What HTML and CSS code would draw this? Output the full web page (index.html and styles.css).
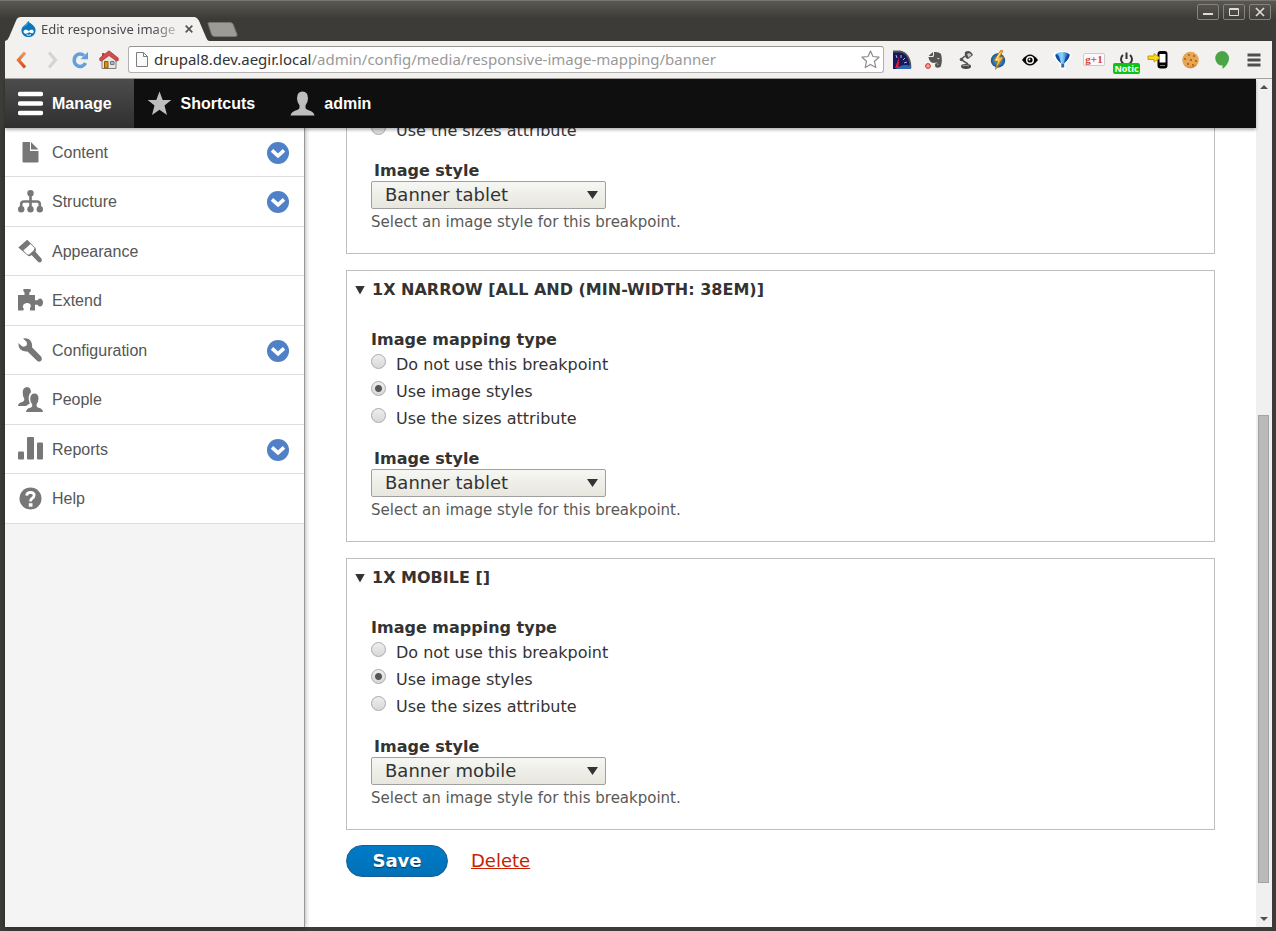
FILE: index.html
```html
<!DOCTYPE html>
<html lang="en">
<head>
<meta charset="utf-8">
<title>Edit responsive image mapping</title>
<link rel="stylesheet" href="styles.css">
</head>
<body>
<svg class="defs" aria-hidden="true">
  <defs>
    <linearGradient id="orange" x1="0" y1="0" x2="0" y2="1"><stop offset="0" stop-color="#f09a5c"/><stop offset="1" stop-color="#dd4814"/></linearGradient>
    <linearGradient id="balloon" x1="0" y1="0" x2="1" y2="0"><stop offset="0" stop-color="#2d9be8"/><stop offset=".45" stop-color="#8fd4ff"/><stop offset="1" stop-color="#0b3f93"/></linearGradient>
    <radialGradient id="globe"><stop offset="0" stop-color="#59b7ea"/><stop offset="1" stop-color="#17518b"/></radialGradient>
    <symbol id="chevron" viewBox="0 0 22 22"><circle cx="11" cy="11" r="11" fill="#4f80c8"/><path d="M5 8.300 11 13.800 17 8.300" fill="none" stroke="#fff" stroke-width="3.600"/></symbol>
  </defs>
</svg>

<header class="titlebar">
  <div class="tab">
    <svg class="tab-shape" viewBox="0 0 204 25" preserveAspectRatio="none" aria-hidden="true"><path d="M0 25Q3 24 4 21L11 4Q12 0 16 0H189Q192 0 194 4L201 21Q202 24 204 25Z" fill="#f2f1f0"/></svg>
    <svg class="favicon" width="15" height="16" viewBox="0 0 15 16" aria-hidden="true"><path d="M7.2 0C8 2.2 14.6 4 14.6 9.4A7 6.6 0 0 1 .4 9.4C.4 5 5.500 4 7.200 0Z" fill="#0678be"/><path d="M6 2.700Q7 2 7.200 .5Q7.500 3 5 4.500Q3 5.500 2.600 6.500Q2.800 4.500 6 2.700Z" fill="#5fb3e2"/><path d="M2.500 10.500C3 8 6 8.500 7.800 10C9.500 8.600 12.500 8 12.700 10.600C12.800 13 10.500 12.600 8.200 11.300C6 13.300 2.500 13.300 2.500 10.500Z" fill="#fff"/><path d="M5.500 13.700Q7.800 15 10 13.600" fill="none" stroke="#fff" stroke-width="1"/></svg>
    <span class="tab-title">Edit responsive image</span>
    <button class="tab-close" aria-label="Close tab"><svg width="8" height="8" viewBox="0 0 8 8"><path d="M.7 .7 7.300 7.300M7.300 .7 .7 7.300" stroke="#555" stroke-width="1.700"/></svg></button>
  </div>
  <button class="new-tab" aria-label="New tab"><svg width="31" height="15" viewBox="0 0 31 15"><path d="M1 1.500Q1 .5 3 .5H23Q25 .5 26 2L30 12.500Q30.500 14.500 28 14.500H7.500Q5.500 14.500 4.500 12.500Z" fill="#9c9b98" stroke="#777570"/></svg></button>
  <div class="window-controls">
    <button aria-label="Minimize"><svg width="20" height="14" viewBox="0 0 20 14"><path d="M5 9H15" stroke="#dfdbd2" stroke-width="2"/></svg></button>
    <button aria-label="Maximize"><svg width="20" height="14" viewBox="0 0 20 14"><path d="M5.500 3.500H14.500V10.500H5.500ZM5 4.500H15" fill="none" stroke="#dfdbd2"/></svg></button>
    <button aria-label="Close"><svg width="20" height="14" viewBox="0 0 20 14"><path d="M6 3 14 11M14 3 6 11" stroke="#dfdbd2" stroke-width="1.700"/></svg></button>
  </div>
</header>

<div class="window">
  <nav class="browser-bar" aria-label="Browser">
    <div class="nav-buttons">
      <button aria-label="Back"><svg width="18" height="18" viewBox="0 0 18 18"><path d="M12 1.500 5.500 9 12 16.500" fill="none" stroke="url(#orange)" stroke-width="3.200"/></svg></button>
      <button aria-label="Forward"><svg width="18" height="18" viewBox="0 0 18 18"><path d="M7 1.500 13.500 9 7 16.500" fill="none" stroke="#d6d3d0" stroke-width="3.200"/></svg></button>
      <button aria-label="Reload"><svg width="18" height="18" viewBox="0 0 18 18"><path d="M14.500 12A6 6.200 0 1 1 13 4.500" fill="none" stroke="#659fdb" stroke-width="3.600"/><path d="M9.500 8.300H17V1Z" fill="#659fdb"/></svg></button>
      <button aria-label="Home"><svg width="20" height="20" viewBox="0 0 20 20"><path d="M3 9 10 3 17 9V18.500H3Z" fill="#e8e6df" stroke="#837e77"/><path d="M3 3H5.500V7H3Z" fill="#b94444"/><path d="M.8 10.500V8L10 .8 19.200 8V10.500L17.500 11 10 5.500 2.500 11Z" fill="#cf4f4f" stroke="#a8292c" stroke-width=".7"/><path d="M5.500 11.500H9V18H5.500Z" fill="#d8930f" stroke="#8d5a0c"/><path d="M11.500 11.500H15V14.500H11.500Z" fill="#a8bdd3" stroke="#68788b"/></svg></button>
    </div>
    <div class="omnibox">
      <svg width="12" height="15" viewBox="0 0 12 15" aria-hidden="true"><path d="M.5 .5H7.500L11.500 4.500V14.500H.5ZM7.500 .5V4.500H11.500" fill="#fafafa" stroke="#7d7d7d"/></svg>
      <div class="url"><span class="host">drupal8.dev.aegir.local</span>/admin/config/media/responsive-image-mapping/banner</div>
      <button class="bookmark" aria-label="Bookmark"><svg width="19" height="19" viewBox="0 0 19 19"><path d="M9.500 1 12 6.500 18 7.200 13.500 11.300 14.800 17.500 9.500 14.400 4.200 17.500 5.500 11.300 1 7.200 7 6.500Z" fill="#fff" stroke="#8c8c8c" stroke-width="1.200" stroke-linejoin="round"/></svg></button>
    </div>
    <div class="extensions">
      <button aria-label="Speed"><svg width="20" height="20" viewBox="0 0 20 20"><path d="M1 1H8C14 2 19 8 19 19H1Z" fill="#17195b"/><path d="M1 1.500H8C14 2.500 18.500 8 18.500 18" fill="none" stroke="#555" stroke-width="1.800"/><path d="M4 19Q10 13 19 16V19Z" fill="#2f66b2"/><path d="M4 5 5 8M9 5V8M13 8 11 10M15 12 12 13" stroke="#aab4e8"/><path d="M3 18 7 7 6.500 18Z" fill="#f5162b"/></svg></button>
      <button aria-label="Clipper"><svg width="20" height="20" viewBox="0 0 20 20"><path d="M5 5.500 9 2V5Q9 6 8 6H5ZM10 2Q15 1.500 17 4Q19 11 16.500 17Q11 19 11 15Q11 12 14 13.500Q13 15 14 15.500Q15 14 13 12.500L9 13Q5 12 4.500 7H9Q10 7 10 5Z" fill="#555"/><path d="M13 8Q15 7.500 15.500 9Q14 9.500 13 8Z" fill="#fff"/><circle cx="4" cy="16" r="2.400" fill="#f79e8d" stroke="#bf3528"/></svg></button>
      <button aria-label="Lamp"><svg width="20" height="20" viewBox="0 0 20 20"><path d="M9 2Q14-1 17 5L12 9Q8 8 9 2Z" fill="#4f4f4f"/><path d="M11 4Q14 2 15.500 5L12.500 7.500Z" fill="#c9c9c9"/><path d="M9 6 5 9.500 12 14" fill="none" stroke="#555" stroke-width="1.600"/><circle cx="5.500" cy="9.500" r="1.800" fill="#555"/><ellipse cx="10" cy="16.500" rx="5" ry="2.400" fill="#444"/><path d="M6.500 16Q10 14.500 13 16" fill="none" stroke="#aaa"/></svg></button>
      <button aria-label="Lightning"><svg width="20" height="20" viewBox="0 0 20 20"><circle cx="10" cy="10.500" r="7.200" fill="url(#globe)"/><path d="M13 0 5.500 11H9.500L7.500 19.500 15.500 7H11.500L15 1Z" fill="#fcb831" stroke="#a77024" stroke-width=".8"/><path d="M12 3 8 10H11" fill="none" stroke="#fff0a8"/></svg></button>
      <button aria-label="Eye"><svg width="20" height="20" viewBox="0 0 20 20"><path d="M2 10Q10-1 18 10Q10 21 2 10Z" fill="#050505"/><circle cx="10" cy="10" r="4" fill="#fff"/><circle cx="10" cy="10" r="2.600" fill="#050505"/><circle cx="9.500" cy="9.500" r=".9" fill="#fff"/></svg></button>
      <button aria-label="Balloon"><svg width="20" height="20" viewBox="0 0 20 20"><path d="M3 4Q10 1 18 4V6L12 14V18H9V14L2.500 6Z" fill="#fff" stroke="#fff" stroke-width="3"/><path d="M3.500 4.500Q5.500 2 10.500 2Q16 2 17.500 4.500Q18 7 12 13.500H9.500Q3 7.500 3.500 4.500Z" fill="url(#balloon)"/><path d="M3.500 4.500Q7 3 9 13.500Q3 8 3.500 4.500ZM17.500 4.500Q14 3 12 13.500Q18 8 17.500 4.500Z" fill="#104b9e"/><path d="M9.300 13.500H12.200V17.500H9.300Z" fill="#2b6ca7"/></svg></button>
      <button aria-label="Plus one" class="plus-one"><span>g+1</span></button>
      <button aria-label="Power" class="power"><svg width="20" height="20" viewBox="0 0 20 20"><path d="M7 5A5.500 5.500 0 1 0 14 5M10.500 2.500V9" fill="none" stroke="#333" stroke-width="2"/></svg><span class="badge">Notic</span></button>
      <button aria-label="Send to phone"><svg width="22" height="20" viewBox="0 0 22 20"><rect x="11.500" y="2" width="8" height="15.500" rx="2" fill="#fff" stroke="#050505" stroke-width="2"/><path d="M12 12.500H19.500V17.500H12ZM12 2H19V4H12Z" fill="#050505"/><path d="M13.500 15.500H18" stroke="#fff" stroke-dasharray="1 1"/><path d="M1 6H7V3.500L13 8 7 12V9.500H1Z" fill="#f8d71c" stroke="#c89d05"/></svg></button>
      <button aria-label="Cookie"><svg width="20" height="20" viewBox="0 0 20 20"><circle cx="10.500" cy="10" r="8.300" fill="#e9a650"/><path d="M3 13Q8 20 17 14Q15 18.500 10 18.300Q5 18 3 13Z" fill="#d98c3c"/><g fill="#8c5827"><circle cx="9" cy="5" r=".9"/><circle cx="14" cy="6" r=".9"/><circle cx="5" cy="9" r=".9"/><circle cx="11" cy="10" r="1"/><circle cx="16" cy="11" r=".9"/><circle cx="8" cy="14" r="1"/><circle cx="13" cy="15" r=".9"/></g></svg></button>
      <button aria-label="Hangouts"><svg width="20" height="20" viewBox="0 0 20 20"><path d="M10 1A7 7.300 0 0 1 17 8.300C17 13 13.500 16.500 10.500 19V15.600A7 7.300 0 1 1 10 1Z" fill="#4ba547"/></svg></button>
      <button aria-label="Menu"><svg width="20" height="20" viewBox="0 0 20 20"><path d="M3.500 5H16.500M3.500 10H16.500M3.500 15H16.500" stroke="#4f4f4f" stroke-width="3"/></svg></button>
    </div>
  </nav>

  <div class="viewport">
    <div class="page">
      <nav class="admin-bar" aria-label="Administration">
        <a href="#" class="active"><svg width="25" height="25" viewBox="0 0 25 25"><path d="M2 3H23M2 12.500H23M2 22H23" stroke="#fff" stroke-width="4.600" stroke-linecap="round"/></svg>Manage</a>
        <a href="#"><svg width="25" height="25" viewBox="0 0 25 25"><path d="M12.500 .5 15.700 9H24.300L17.500 14.500 20 24 12.500 18.700 5 24 7.500 14.500 .7 9H9.300Z" fill="#bebebe"/></svg>Shortcuts</a>
        <a href="#"><svg width="25" height="25" viewBox="0 0 25 25"><path d="M12.500 .5Q18 .5 18 7.500Q18 11 15.500 14.500V17Q15.500 18 18 19Q24 20.500 24.500 24.500H.5Q1 20.500 7 19Q9.500 18 9.500 17V14.500Q7 11 7 7.500Q7 .5 12.500 .5Z" fill="#bebebe"/></svg>admin</a>
      </nav>
      <div class="columns">
        <aside class="sidebar">
          <ul>
            <li><a href="#"><svg width="25" height="25" viewBox="0 0 25 25"><path d="M4.500 2H12V11H20.500V21.500Q20.500 22.500 19.500 22.500H5.500Q4.500 22.500 4.500 21.500ZM13 2 20.500 9.500H13Z" fill="#777"/></svg>Content</a><button aria-label="Expand Content"><svg width="22" height="22"><use href="#chevron"/></svg></button></li>
            <li><a href="#"><svg width="25" height="25" viewBox="0 0 25 25"><path d="M12.500 4V21M3.200 20V15Q3.200 12.500 6 12.500H19Q21.800 12.500 21.800 15V20" fill="none" stroke="#777" stroke-width="2.600"/><g fill="#777"><circle cx="12.500" cy="4.300" r="3.200"/><circle cx="3.200" cy="20.300" r="3.200"/><circle cx="12.500" cy="20.300" r="3.200"/><circle cx="21.800" cy="20.300" r="3.200"/></g></svg>Structure</a><button aria-label="Expand Structure"><svg width="22" height="22"><use href="#chevron"/></svg></button></li>
            <li><a href="#"><svg width="25" height="25" viewBox="0 0 25 25"><path d="M9.200 .8 17.500 9Q18.500 11 17.300 12.500L23.300 19.500Q24.500 21.500 23 23Q21.500 24 20 22.700L13.500 16Q12.500 17.500 10.300 17L.3 8.500Z" fill="#777"/><path d="M12.500 5 16.500 9 15.800 11.200 11.200 15.600 9.300 15.500 5.300 11.500Z" fill="#fff"/></svg>Appearance</a></li>
            <li><a href="#"><svg width="25" height="25" viewBox="0 0 25 25"><path d="M5.500 1H12.500Q13.500 3.500 11.300 4.500V7H17V12.300H19.500Q20.300 10.500 22.300 10.500Q25 11.300 25 14.500Q24.700 18.500 22 18.500Q20.300 18.300 19.500 16.800H17V22.500H12.500Q11.500 21.500 12 20Q13.300 18.500 12.500 16.500Q9.500 13.700 5.500 16.500Q4 18.800 5.700 20.400Q6 22 5 22.500H0V7H6.500V4.500Q4.500 3 5.500 1Z" fill="#777"/></svg>Extend</a></li>
            <li><a href="#"><svg width="25" height="25" viewBox="0 0 25 25"><path d="M5 .5Q10.500-.5 13 3.500Q14.500 6 14 9.300L23 18.500Q25 21.500 22.500 23.200Q20.500 24.500 18.500 22.300L9.500 13.500Q5.500 14 2.500 11.500Q.3 9.500 .3 5L4 8.300Q6.500 9.300 8.500 7.500Q9.500 5 8.300 3.500Z" fill="#777"/></svg>Configuration</a><button aria-label="Expand Configuration"><svg width="22" height="22"><use href="#chevron"/></svg></button></li>
            <li><a href="#"><svg width="25" height="25" viewBox="0 0 25 25"><path d="M9 0Q13 .5 13 5.300Q10.500 7.500 10.700 12Q11 14.500 11.800 16.500Q9 18 8 19H0Q.3 16 3.500 15.300Q6.500 14.500 6.300 11.700Q4.500 9 4.700 5Q5 .3 9 0ZM16.500 6.500Q20.700 6.500 20.500 12Q20.300 15 18.700 17Q18 20 20.500 20.700Q24.700 21.500 25 25H8Q8.300 21.500 12.300 20.700Q15 20 14 17Q12.300 15 12.200 12Q12.300 6.500 16.500 6.500Z" fill="#777"/></svg>People</a></li>
            <li><a href="#"><svg width="25" height="25" viewBox="0 0 25 25"><g fill="#777"><rect x="0" y="14.500" width="6" height="8" rx="1"/><rect x="9" y="0" width="7" height="22.500" rx="1"/><rect x="19" y="5.500" width="6" height="17" rx="1"/></g></svg>Reports</a><button aria-label="Expand Reports"><svg width="22" height="22"><use href="#chevron"/></svg></button></li>
            <li><a href="#"><svg width="25" height="25" viewBox="0 0 25 25"><circle cx="12.500" cy="12.500" r="11" fill="#777"/><path d="M8.700 9.600Q8.900 6.300 12.500 6.300Q16.200 6.400 16.200 9.300Q16.100 11.200 14 12.500Q12.500 13.500 12.500 15.500" fill="none" stroke="#fff" stroke-width="2.800"/><path d="M10.800 17.200H14.500V20.700H10.800Z" fill="#fff"/></svg>Help</a></li>
          </ul>
        </aside>
        <main class="content">
          <form>
            <details class="panel" open>
              <summary>1x Wide [all and (min-width: 60em)]</summary>
              <fieldset>
                <legend>Image mapping type</legend>
                <label class="option"><input type="radio" name="wide">Do not use this breakpoint</label>
                <label class="option"><input type="radio" name="wide" checked>Use image styles</label>
                <label class="option"><input type="radio" name="wide">Use the sizes attribute</label>
              </fieldset>
              <label class="field-label" for="style-wide">Image style</label>
              <div class="select"><select id="style-wide"><option>Banner tablet</option><option>Banner mobile</option></select></div>
              <p class="hint">Select an image style for this breakpoint.</p>
            </details>
            <details class="panel" open>
              <summary>1x Narrow [all and (min-width: 38em)]</summary>
              <fieldset>
                <legend>Image mapping type</legend>
                <label class="option"><input type="radio" name="narrow">Do not use this breakpoint</label>
                <label class="option"><input type="radio" name="narrow" checked>Use image styles</label>
                <label class="option"><input type="radio" name="narrow">Use the sizes attribute</label>
              </fieldset>
              <label class="field-label" for="style-narrow">Image style</label>
              <div class="select"><select id="style-narrow"><option>Banner tablet</option><option>Banner mobile</option></select></div>
              <p class="hint">Select an image style for this breakpoint.</p>
            </details>
            <details class="panel" open>
              <summary>1x Mobile []</summary>
              <fieldset>
                <legend>Image mapping type</legend>
                <label class="option"><input type="radio" name="mobile">Do not use this breakpoint</label>
                <label class="option"><input type="radio" name="mobile" checked>Use image styles</label>
                <label class="option"><input type="radio" name="mobile">Use the sizes attribute</label>
              </fieldset>
              <label class="field-label" for="style-mobile">Image style</label>
              <div class="select"><select id="style-mobile"><option>Banner mobile</option><option>Banner tablet</option></select></div>
              <p class="hint">Select an image style for this breakpoint.</p>
            </details>
            <div class="actions">
              <button type="button" class="save">Save</button>
              <a href="#" class="delete">Delete</a>
            </div>
          </form>
        </main>
      </div>
    </div>
    <div class="scrollbar" aria-hidden="true">
      <svg width="8" height="4" viewBox="0 0 8 4"><path d="M0 4 4 0 8 4Z" fill="#505050"/></svg>
      <div class="track"><div class="thumb"></div></div>
      <svg width="8" height="4" viewBox="0 0 8 4"><path d="M0 0 4 4 8 0Z" fill="#505050"/></svg>
    </div>
  </div>
</div>
</body>
</html>
```

FILE: styles.css
```css
* { box-sizing: border-box; }

body {
  margin: 0;
  height: 100vh;
  display: flex;
  flex-direction: column;
  overflow: hidden;
  background: #3c3b37;
  font-family: "DejaVu Sans", sans-serif;
  font-size: 16px;
  color: #333;
}

button {
  padding: 0;
  border: 0;
  background: none;
  font: inherit;
  display: flex;
  align-items: center;
  justify-content: center;
}

svg { display: block; flex: none; }
.defs { position: absolute; width: 0; height: 0; }

/* Window frame */
.titlebar {
  flex: none;
  display: flex;
  align-items: flex-end;
  height: 41px;
  padding: 0 5px;
  border-top: 1px solid #77756f;
  background: linear-gradient(#5a5851, #3c3b37 18px);
}

.window {
  flex: 1;
  min-height: 0;
  display: flex;
  flex-direction: column;
  margin: 0 4px 4px 5px;
}

.tab {
  position: relative;
  display: flex;
  align-items: center;
  width: 204px;
  height: 24px;
  padding: 0 10px 0 16px;
  font-family: "Noto Sans", sans-serif;
  font-size: 13px;
  color: #4a4a4a;
}
.tab-shape { position: absolute; inset: 0; width: 100%; height: 100%; }
.favicon, .tab-close { position: relative; flex: none; }
.tab-title {
  position: relative;
  flex: none;
  width: 138px;
  margin: 0 6px 0 5px;
  white-space: nowrap;
  mask-image: linear-gradient(to right, #000 112px, transparent 144px);
}
.new-tab { margin: 0 0 4px -2px; }

.window-controls {
  display: flex;
  gap: 4px;
  margin: 0 0 auto auto;
  padding-top: 3px;
}
.window-controls button {
  width: 22px;
  height: 16px;
  border: 1px solid #85837c;
  border-radius: 2px;
  background: linear-gradient(#55534d, #403f3a);
}

/* Browser toolbar */
.browser-bar {
  flex: none;
  display: flex;
  align-items: center;
  height: 38px;
  padding: 0 2px;
  border-bottom: 1px solid #a5a39f;
  background: #f2f1f0;
}
.nav-buttons { display: flex; margin-right: 5px; }
.nav-buttons button { width: 29px; height: 28px; }

.omnibox {
  flex: 1;
  min-width: 0;
  display: flex;
  align-items: center;
  height: 27px;
  padding: 0 3px 0 7px;
  margin-right: 2px;
  border: 1px solid #b3b1ae;
  border-top-color: #979592;
  border-radius: 3px;
  background: #fff;
}
.url {
  flex: 1;
  min-width: 0;
  margin-left: 6px;
  padding-bottom: 2px;
  white-space: nowrap;
  font-family: "Noto Sans", sans-serif;
  font-size: 15px;
  line-height: 22px;
  color: #999;
}
.host { color: #333; }

.extensions { display: flex; flex: none; }
.extensions button { width: 32px; height: 28px; }
.plus-one span {
  padding: 0 1px;
  border: 1px solid #ccc;
  border-radius: 2px;
  background: #fafafa;
  font: bold 11px/11px "Liberation Serif", serif;
  color: #d2483c;
}
.power { position: relative; }
.badge {
  position: absolute;
  left: 3px;
  bottom: 0;
  width: 27px;
  border-radius: 2px;
  background: #0bc415;
  font: bold 9px/11px "Noto Sans", sans-serif;
  color: #fff;
}

/* Page viewport */
.viewport { flex: 1; min-height: 0; display: flex; }
.page {
  flex: 1;
  min-width: 0;
  display: flex;
  flex-direction: column;
  background: #fff;
}

.admin-bar {
  position: relative;
  z-index: 2;
  flex: none;
  display: flex;
  height: 49px;
  background: #0f0f0f;
  box-shadow: 0 2px 3px rgba(0, 0, 0, .3);
  font-family: "Liberation Sans", sans-serif;
  font-weight: bold;
}
.admin-bar a {
  display: flex;
  align-items: center;
  gap: 9px;
  padding: 0 22px 0 13px;
  color: #fff;
  text-decoration: none;
}
.admin-bar .active { background: linear-gradient(#4c4c4c, #303030); }

.columns { flex: 1; min-height: 0; display: flex; }

.sidebar {
  position: relative;
  z-index: 1;
  flex: none;
  width: 300px;
  border-right: 1px solid #999;
  background: #f4f4f4;
  box-shadow: 0 0 5px rgba(0, 0, 0, .4);
  font-family: "Liberation Sans", sans-serif;
}
.sidebar ul { margin: 0; padding: 0; list-style: none; }
.sidebar li {
  display: flex;
  align-items: center;
  justify-content: space-between;
  height: 49px;
  padding: 1px 15px 0 13px;
  border-bottom: 1px solid #ddd;
  background: #fff;
}
.sidebar li:nth-child(even) { height: 50px; padding-top: 0; }
.sidebar a {
  display: flex;
  align-items: center;
  gap: 9px;
  color: #565656;
  text-decoration: none;
}

/* The form is scrolled to its end */
.content {
  flex: 1;
  min-width: 0;
  display: flex;
  flex-direction: column;
  justify-content: flex-end;
  overflow: hidden;
  padding: 0 41px 50px;
}

.panel {
  margin-bottom: 16px;
  padding: 0 24px 21px;
  border: 1px solid #bfbfbf;
}
.panel summary {
  display: flex;
  align-items: center;
  gap: 7px;
  height: 36px;
  margin: 0 -16px 21px;
  font-weight: bold;
  text-transform: uppercase;
  list-style: none;
}
.panel summary::before,
.select::after {
  content: "";
  width: 11px;
  height: 8px;
  background: #333;
  clip-path: polygon(0 0, 100% 0, 50% 100%);
}
.panel summary::before { width: 10px; height: 9px; margin-top: 2px; }

fieldset { margin: 0 0 17px; padding: 0; border: 0; }
legend { padding: 0; font-weight: bold; line-height: 23px; }
.option { display: flex; gap: 10px; line-height: 27px; }
.option input {
  appearance: none;
  flex: none;
  width: 15px;
  height: 15px;
  margin: 3px 0 0;
  border: 1px solid #aaa;
  border-radius: 50%;
  background: linear-gradient(#eee, #d8d8d8);
}
.option input:checked {
  background: radial-gradient(circle, #555 3px, transparent 4px), linear-gradient(#eee, #d8d8d8);
}

.field-label {
  display: block;
  padding-left: 3px;
  font-weight: bold;
  line-height: 20px;
}
.select {
  display: grid;
  width: 235px;
  height: 28px;
  align-items: center;
}
.select select {
  grid-area: 1 / 1;
  appearance: none;
  width: 100%;
  height: 100%;
  padding: 0 30px 2px 13px;
  border: 1px solid #a0a0a0;
  border-radius: 2px;
  background: linear-gradient(#f6f6f3, #e7e7df);
  font: inherit;
  font-size: 18px;
  color: #333;
}
.select::after {
  grid-area: 1 / 1;
  justify-self: end;
  margin-right: 8px;
  pointer-events: none;
}
.hint {
  margin: 3px 0 0;
  font-size: 15px;
  line-height: 20px;
  color: #595959;
}

.actions {
  display: flex;
  align-items: center;
  gap: 23px;
  margin-top: -1px;
  font-size: 18px;
}
.save {
  width: 102px;
  height: 32px;
  padding-bottom: 2px;
  border: 1px solid #1e5c90;
  border-radius: 16px;
  background: linear-gradient(#007bc6, #0071b8);
  font-weight: bold;
  color: #fff;
  text-shadow: 0 1px 1px rgba(0, 0, 0, .5);
}
.delete { padding-bottom: 2px; color: #c72100; }

/* Scrollbar */
.scrollbar {
  flex: none;
  display: flex;
  flex-direction: column;
  align-items: center;
  width: 16px;
  padding: 6px 1px 6px 0;
  background: #f0f0f0;
}
.track {
  flex: 1;
  display: flex;
  flex-direction: column;
  justify-content: flex-end;
  padding: 0 0 34px;
}
.thumb {
  width: 11px;
  height: 59%;
  border: 1px solid #a3a3a3;
  background: #bababa;
}
```
